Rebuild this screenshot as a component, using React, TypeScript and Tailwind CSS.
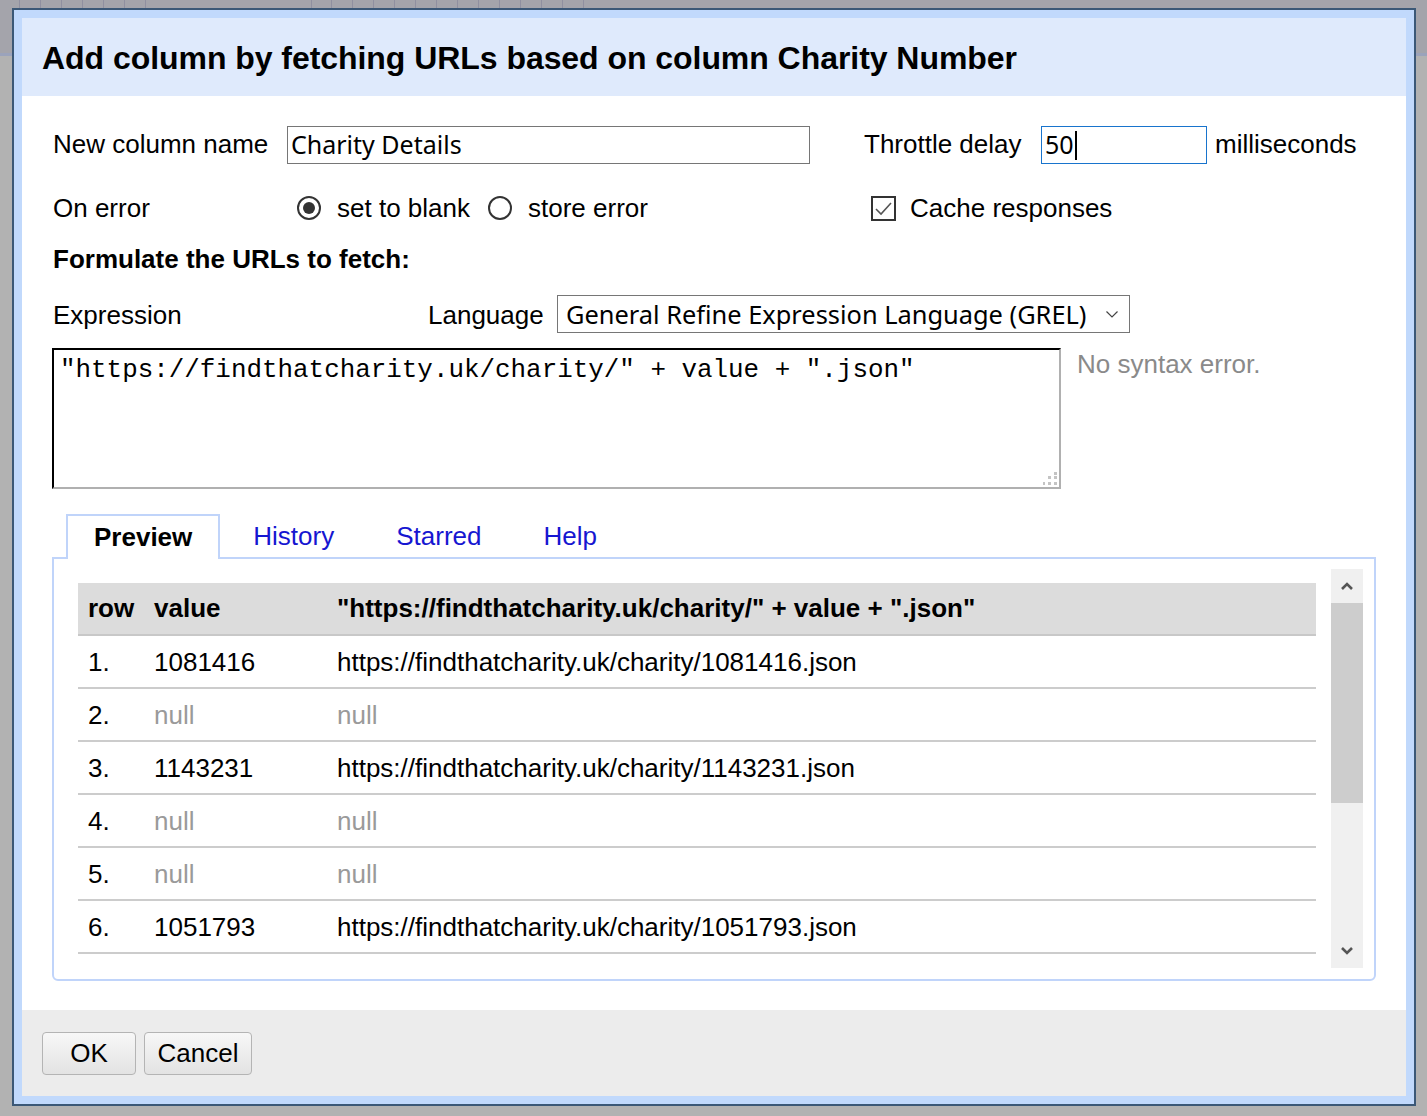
import React from "react";

const rows = [
  { n: "1.", v: "1081416" },
  { n: "2.", v: null },
  { n: "3.", v: "1143231" },
  { n: "4.", v: null },
  { n: "5.", v: null },
  { n: "6.", v: "1051793" },
];

const topCells = [20, 21, 21, 21, 21, 21, 21, 166, 20, 21, 21, 21, 21, 21, 21, 21, 21, 21, 21, 21, 21];

const Radio = ({ checked }: { checked?: boolean }) => (
  <span className="w-[24px] h-[24px] rounded-full border-2 border-[#333] bg-white flex items-center justify-center shrink-0">
    {checked && <span className="w-[12px] h-[12px] rounded-full bg-[#333]" />}
  </span>
);

const Chevron = ({ up }: { up?: boolean }) => (
  <svg width="14" height="10" viewBox="0 0 14 10">
    <polyline
      points={up ? "2,8 7,3 12,8" : "2,2 7,7 12,2"}
      fill="none"
      stroke="#555"
      strokeWidth="2.6"
    />
  </svg>
);

const App = () => {
  return (
    <div className="relative w-[1427px] h-[1116px] bg-[#b2b2b2] overflow-hidden font-['Liberation_Sans',Arial,sans-serif] text-black">
      {/* page behind the dialog */}
      <div className="h-[56px] bg-[#a4a4ab] border-b-[3px] border-[#9ba3bb] flex">
        {topCells.map((w, i) => (
          <div key={i} style={{ width: w }} className="h-full border-r border-[#9090a0] shrink-0" />
        ))}
      </div>

      <div className="absolute left-[12px] top-[8px] w-[1404px] h-[1098px] border-2 border-[#3b5877] bg-[#c1d9fc] p-[8px]">
        <div className="h-full flex flex-col bg-white">
          {/* header */}
          <div className="h-[78px] bg-[#dfeafc] flex items-center pl-[20px]">
            <h1 className="text-[32px] font-bold tracking-[-0.05px] mt-[1px]">
              Add column by fetching URLs based on column Charity Number
            </h1>
          </div>

          {/* body */}
          <div className="flex-1 pl-[30px] pt-[30px] text-[26px]">
            <div className="flex items-center h-[38px]">
              <span className="w-[235px] pl-[1px] -mt-[2px]">New column name</span>
              <div className="w-[523px] h-[38px] border border-[#767676] flex items-center pl-[3px] font-['Noto_Sans',sans-serif] text-[25px]">
                Charity Details
              </div>
              <span className="ml-[54px] w-[177px] -mt-[2px]">Throttle delay</span>
              <div className="w-[166px] h-[38px] border border-[#1874cd] flex items-center pl-[3px] font-['Noto_Sans',sans-serif] text-[25px]">
                50<span className="w-[2px] h-[29px] bg-black ml-[1px]" />
              </div>
              <span className="ml-[8px] -mt-[2px]">milliseconds</span>
            </div>

            <div className="flex items-center h-[36px] mt-[26px]">
              <span className="w-[245px] pl-[1px]">On error</span>
              <div className="w-[574px] flex items-center">
                <Radio checked />
                <span className="ml-[16px]">set to blank</span>
                <span className="ml-[18px]">
                  <Radio />
                </span>
                <span className="ml-[16px]">store error</span>
              </div>
              <span className="w-[25px] h-[25px] border-2 border-[#333] bg-white flex items-center justify-center shrink-0">
                <svg width="19" height="15" viewBox="0 0 19 15">
                  <polyline points="2,8 7,13 17,2" fill="none" stroke="#555" strokeWidth="1.6" />
                </svg>
              </span>
              <span className="ml-[14px]">Cache responses</span>
            </div>

            <div className="mt-[18px] leading-[30px] font-bold pl-[1px]">Formulate the URLs to fetch:</div>

            <div className="flex items-center h-[38px] mt-[21px]">
              <span className="w-[376px] pl-[1px] mt-[3px]">Expression</span>
              <span className="w-[129px] mt-[3px]">Language</span>
              <div className="w-[573px] h-[38px] border border-[#767676] flex items-center justify-between pl-[8px] pr-[10px] font-['Noto_Sans',sans-serif] text-[25.4px]">
                <span className="mt-[1px]">General Refine Expression Language (GREL)</span>
                <svg width="14" height="10" viewBox="0 0 14 10">
                  <polyline points="1.5,2.5 7,8 12.5,2.5" fill="none" stroke="#444" strokeWidth="1.2" />
                </svg>
              </div>
            </div>

            <div className="flex mt-[15px]">
              <div className="relative w-[1009px] h-[141px] border-2 border-t-black border-l-black border-r-[#b0b0b0] border-b-[#b0b0b0] pl-[6px] pt-[4px] font-['Liberation_Mono',monospace] text-[25.9px] leading-[32px] whitespace-pre">
                {'"https://findthatcharity.uk/charity/" + value + ".json"'}
                <svg className="absolute right-[2px] bottom-[2px]" width="14" height="14" viewBox="0 0 14 14">
                  <rect x="11" y="1" width="3" height="3" fill="#c4c4c4" />
                  <rect x="5" y="5" width="3" height="3" fill="#c4c4c4" />
                  <rect x="11" y="5" width="3" height="3" fill="#c4c4c4" />
                  <rect x="-1" y="11" width="3" height="3" fill="#c4c4c4" />
                  <rect x="5" y="11" width="3" height="3" fill="#c4c4c4" />
                  <rect x="11" y="11" width="3" height="3" fill="#c4c4c4" />
                </svg>
              </div>
              <span className="ml-[16px] -mt-[3px] text-[#8a8a8a] text-[26px]">No syntax error.</span>
            </div>

            {/* tabs */}
            <div className="flex mt-[25px] ml-[14px] h-[45px] relative z-10">
              <div className="px-[26px] border-2 border-b-0 border-[#c0d4fa] bg-white flex items-center font-bold">
                Preview
              </div>
              {["History", "Starred", "Help"].map((t) => (
                <div key={t} className="ml-[4px] px-[29px] flex items-center text-[#1616d1]">
                  {t}
                </div>
              ))}
            </div>

            <div className="w-[1324px] h-[424px] -mt-[2px] border-2 border-[#c0d4fa] rounded-b-[6px] flex">
              <div className="w-[1262px] pl-[24px] pt-[24px] overflow-hidden">
                <div className="w-[1238px]">
                  <div className="flex items-center h-[53px] bg-[#dcdcdc] border-b-2 border-[#c8c8c8] font-bold">
                    <span className="w-[66px] pl-[10px]">row</span>
                    <span className="w-[183px] pl-[10px]">value</span>
                    <span className="pl-[10px]">{'"https://findthatcharity.uk/charity/" + value + ".json"'}</span>
                  </div>
                  {rows.map((r) => (
                    <div key={r.n} className="flex items-center h-[53px] pt-[2px] border-b-2 border-[#cccccc]">
                      <span className="w-[66px] pl-[10px]">{r.n}</span>
                      <span className={`w-[183px] pl-[10px] ${r.v ? "" : "text-[#9a9a9a]"}`}>{r.v ?? "null"}</span>
                      <span className={`pl-[10px] ${r.v ? "" : "text-[#9a9a9a]"}`}>
                        {r.v ? `https://findthatcharity.uk/charity/${r.v}.json` : "null"}
                      </span>
                    </div>
                  ))}
                </div>
              </div>
              <div className="ml-[15px] mt-[10px] w-[32px] h-[399px] bg-[#f0f0f0] flex flex-col">
                <div className="h-[34px] flex items-center justify-center">
                  <Chevron up />
                </div>
                <div className="h-[200px] bg-[#cdcdcd]" />
                <div className="flex-1" />
                <div className="h-[34px] flex items-center justify-center">
                  <Chevron />
                </div>
              </div>
            </div>
          </div>

          {/* footer */}
          <div className="h-[86px] bg-[#ececec] pl-[20px] pt-[22px] flex gap-[8px] text-[26px]">
            <button className="w-[94px] h-[43px] rounded-[4px] border border-[#b4b4b4] bg-gradient-to-b from-[#f7f7f7] to-[#e3e3e3]">
              OK
            </button>
            <button className="w-[108px] h-[43px] rounded-[4px] border border-[#b4b4b4] bg-gradient-to-b from-[#f7f7f7] to-[#e3e3e3]">
              Cancel
            </button>
          </div>
        </div>
      </div>
    </div>
  );
};

export default App;
